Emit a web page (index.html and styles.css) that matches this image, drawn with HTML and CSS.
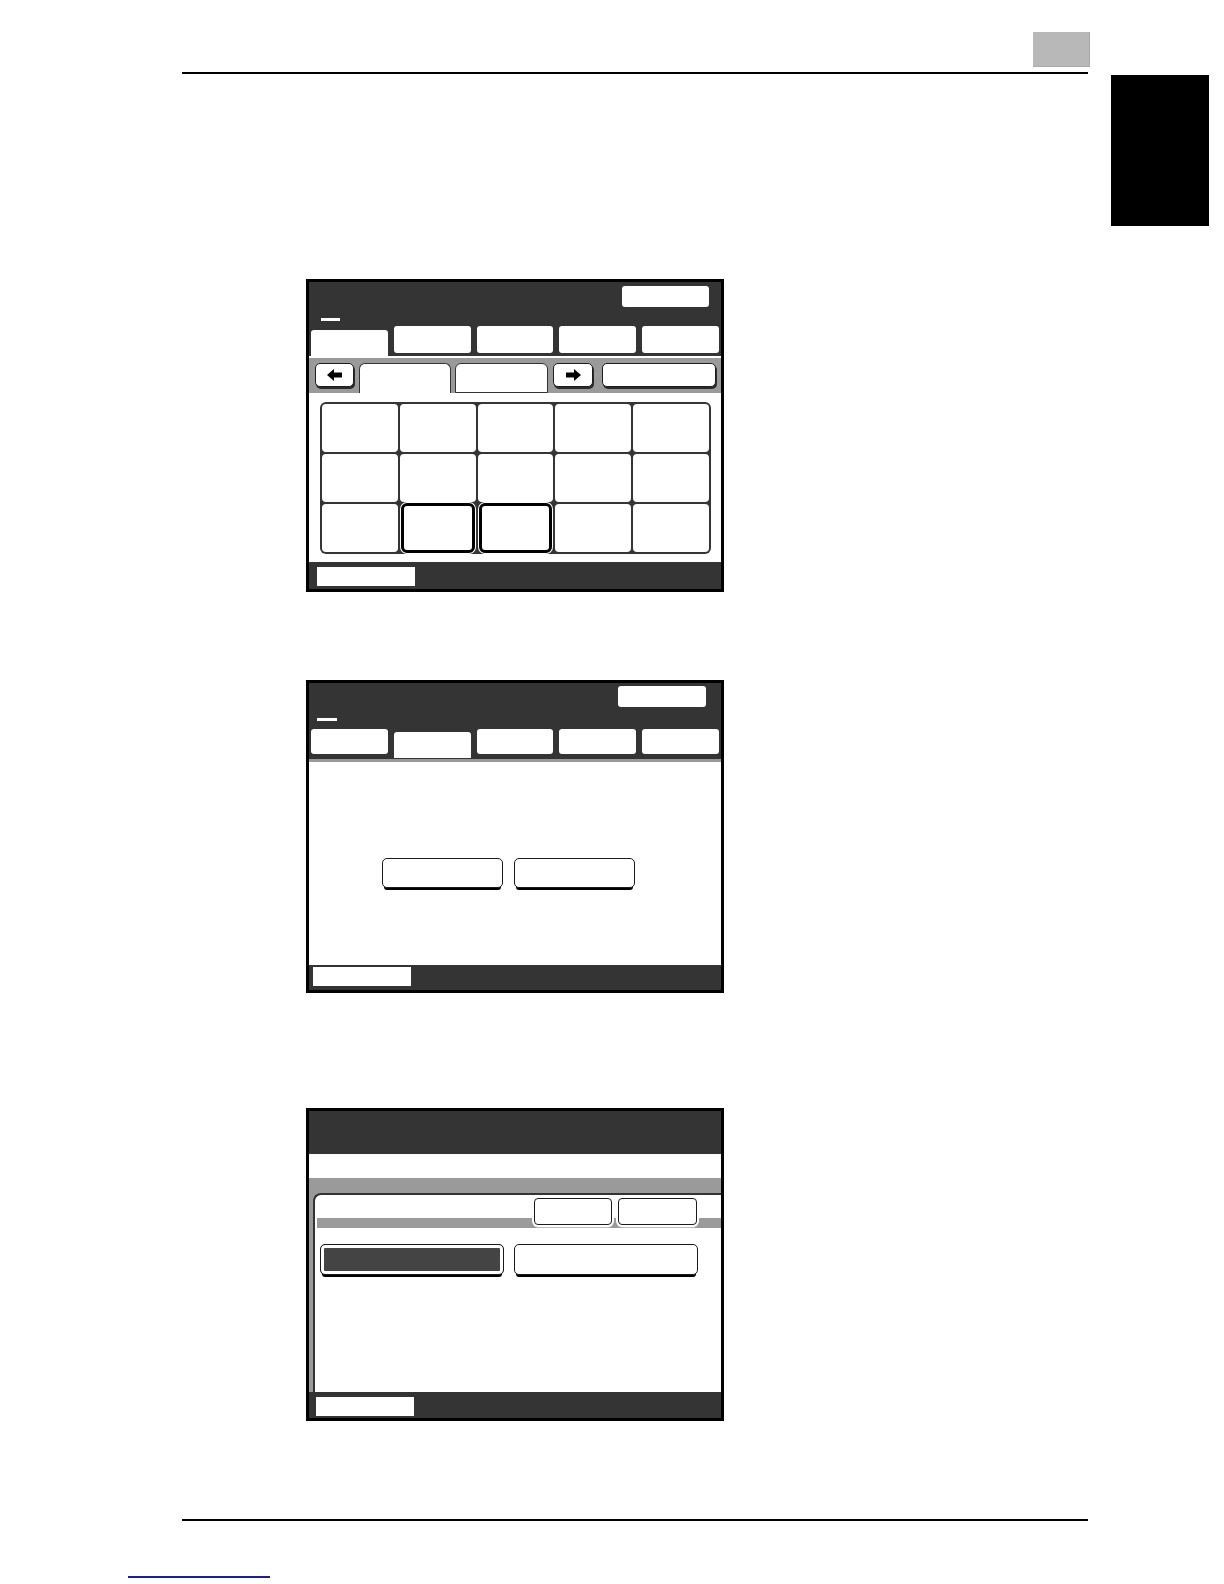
FILE: index.html
```html
<!DOCTYPE html>
<html lang="en">
<head>
<meta charset="utf-8">
<title>Panel screens</title>
<link rel="stylesheet" href="styles.css">
</head>
<body>
<div class="page">
  <div class="main">
    <div class="top">
      <div class="pagebox"></div>
    </div>
    <div class="rule"></div>

    <!-- Screen 1 -->
    <div class="frame s1">
      <div class="hdr hdr1">
        <div class="close c1"></div>
        <div class="dash d1"></div>
        <div class="tabs tabs1">
          <div class="tab active"></div>
          <div class="tab"></div>
          <div class="tab"></div>
          <div class="tab"></div>
          <div class="tab"></div>
        </div>
      </div>
      <div class="subbar">
        <div class="arrow-btn left">
          <svg width="16" height="12" viewBox="0 0 16 12"><polygon points="0,6 7,0 7,3.5 15,3.5 15,8.5 7,8.5 7,12" fill="#000"/></svg>
        </div>
        <div class="subtab open"></div>
        <div class="subtab closed"></div>
        <div class="arrow-btn right">
          <svg width="16" height="12" viewBox="0 0 16 12"><polygon points="16,6 9,0 9,3.5 1,3.5 1,8.5 9,8.5 9,12" fill="#000"/></svg>
        </div>
        <div class="wide-btn"></div>
      </div>
      <div class="content1">
        <div class="grid">
          <div class="cell"></div><div class="cell"></div><div class="cell"></div><div class="cell"></div><div class="cell"></div>
          <div class="cell"></div><div class="cell"></div><div class="cell"></div><div class="cell"></div><div class="cell"></div>
          <div class="cell"></div><div class="cell sel"></div><div class="cell sel"></div><div class="cell"></div><div class="cell"></div>
        </div>
      </div>
      <div class="ftr f1"><div class="ftr-box"></div></div>
    </div>

    <!-- Screen 2 -->
    <div class="frame s2">
      <div class="hdr hdr2">
        <div class="close c2"></div>
        <div class="dash d2"></div>
        <div class="tabs tabs2">
          <div class="tab"></div>
          <div class="tab active"></div>
          <div class="tab"></div>
          <div class="tab"></div>
          <div class="tab"></div>
        </div>
      </div>
      <div class="content2">
        <div class="btn b2"></div>
        <div class="btn b2"></div>
      </div>
      <div class="ftr f2"><div class="ftr-box"></div></div>
    </div>

    <!-- Screen 3 -->
    <div class="frame s3">
      <div class="hdr3"></div>
      <div class="band"></div>
      <div class="s3body">
        <div class="panel">
          <div class="prow">
            <div class="sbtn w78"></div>
            <div class="sbtn w79"></div>
          </div>
          <div class="brow">
            <div class="btn big dark"></div>
            <div class="btn big"></div>
          </div>
        </div>
      </div>
      <div class="ftr f3"><div class="ftr-box"></div></div>
    </div>

    <div class="rule bottom"></div>
  </div>
  <div class="side">
    <div class="thumb"></div>
  </div>
</div>
<div class="link"></div>
</body>
</html>
```

FILE: styles.css
```css
html, body {
  margin: 0;
  padding: 0;
  background: #fff;
  font-family: "Liberation Sans", Arial, sans-serif;
}
body {
  width: 1224px;
  height: 1584px;
  overflow: hidden;
}
.page {
  display: flex;
  align-items: flex-start;
}
.main {
  margin-left: 182px;
  width: 906px;
  display: flex;
  flex-direction: column;
}
.top {
  height: 72px;
  display: flex;
  justify-content: flex-end;
}
.pagebox {
  margin-top: 32px;
  margin-right: -2px;
  width: 57px;
  height: 35px;
  background: #b8b8b8;
  box-shadow: inset -1px -1px 0 #a9a9a9;
}
.rule {
  height: 2px;
  background: #000;
}
.rule.bottom {
  margin-top: 98px;
}
.side {
  margin-left: 23px;
  width: 98px;
  padding-top: 75px;
}
.thumb {
  height: 151px;
  background: #000;
}
.link {
  margin-left: 128px;
  margin-top: 55px;
  width: 142px;
  height: 2px;
  background: #1f1f8a;
}

/* frames */
.frame {
  width: 412px;
  height: 307px;
  border: 3px solid #000;
  margin-left: 124px;
  display: flex;
  flex-direction: column;
  background: #fff;
}
.s1 { margin-top: 205px; }
.s2 { margin-top: 88px; }
.s3 { margin-top: 115px; }

.hdr {
  background: #343434;
  display: flex;
  flex-direction: column;
}
.hdr1 {
  height: 74px;
  border-bottom: 2px solid #fff;
}
.hdr2 {
  height: 76px;
  border-bottom: 3px solid #9a9a9a;
}
.close {
  align-self: flex-end;
  width: 87px;
  height: 21px;
  background: #fff;
  border-radius: 3px;
}
.c1 { margin: 4px 12px 0 0; }
.c2 { margin: 3px 15px 0 0; width: 88px; }
.dash {
  width: 19px;
  height: 3px;
  background: #fff;
}
.d1 { margin: 11px 0 0 12px; }
.d2 { margin: 11px 0 0 8px; width: 20px; }
.tabs {
  margin-top: auto;
  display: flex;
  align-items: flex-end;
  gap: 6px;
  padding: 0 2px;
}
.tab {
  flex: 1;
  background: #fff;
  border-radius: 3px;
}
.tabs1 .tab { height: 27px; margin-bottom: 3px; }
.tabs1 .tab.active { height: 26px; margin-bottom: 0; border-radius: 3px 3px 0 0; }
.tabs2 .tab { height: 25px; margin-bottom: 5px; }
.tabs2 .tab.active { height: 26px; margin-bottom: 1px; border-radius: 3px 3px 0 0; }

/* screen 1 sub bar */
.subbar {
  height: 35px;
  box-sizing: border-box;
  background: #9a9a9a;
  display: flex;
  align-items: flex-start;
  padding: 5px 0 0 6px;
}
.arrow-btn {
  box-sizing: border-box;
  height: 24px;
  background: #fff;
  border: 1.5px solid #1e1e1e;
  border-radius: 5px;
  box-shadow: 1px 2px 0 #2a2a2a;
  display: flex;
  align-items: center;
  justify-content: center;
}
.arrow-btn.left { width: 39px; margin-right: 5px; }
.arrow-btn.right { width: 40px; margin-right: 9px; }
.subtab {
  box-sizing: border-box;
  height: 30px;
  background: #fff;
  border: 1.5px solid #333;
  border-radius: 6px 6px 0 0;
}
.subtab.open { width: 92px; margin-right: 4px; border-bottom: none; }
.subtab.closed { width: 93px; margin-right: 5px; border-bottom: 1.5px solid #333; }
.wide-btn {
  box-sizing: border-box;
  width: 114px;
  height: 24px;
  background: #fff;
  border: 1.5px solid #1e1e1e;
  border-radius: 5px;
  box-shadow: 1px 2px 0 #2a2a2a;
}
.content1 {
  height: 169px;
  box-sizing: border-box;
  padding: 9px 0 0 11px;
  background: #fff;
}
.grid {
  box-sizing: border-box;
  width: 391px;
  height: 152px;
  padding: 2px;
  gap: 2px;
  background: #353535;
  border-radius: 6px;
  display: grid;
  grid-template-columns: repeat(5, 1fr);
  grid-template-rows: repeat(3, 1fr);
}
.cell {
  background: #fff;
  border-radius: 4px;
}
.cell.sel {
  border: 3px solid #000;
  margin: -1px 1px;
  border-radius: 6px;
  box-shadow: 0 0 0 1px #fff;
}

/* footers */
.ftr {
  background: #343434;
  box-sizing: border-box;
}
.ftr-box {
  width: 98px;
  height: 19px;
  background: #fff;
}
.f1 { height: 27px; padding: 5px 0 0 8px; }
.f2 { height: 25px; padding: 2px 0 0 4px; }
.f3 { height: 26px; padding: 5px 0 0 7px; }

/* screen 2 */
.content2 {
  height: 203px;
  box-sizing: border-box;
  padding: 96px 0 0 73px;
  display: flex;
  align-items: flex-start;
  gap: 11px;
}
.btn {
  box-sizing: border-box;
  background: #fff;
  border: 1.5px solid #1a1a1a;
  border-radius: 5px;
  box-shadow: 0 4px 0 -2px #000;
}
.b2 { width: 121px; height: 30px; }

/* screen 3 */
.hdr3 {
  height: 43px;
  background: #343434;
}
.band {
  height: 24px;
  background: #fff;
}
.s3body {
  height: 214px;
  box-sizing: border-box;
  padding-top: 15px;
  background: #9a9a9a;
  display: flex;
}
.panel {
  flex: 1;
  margin-left: 4px;
  background: #fff;
  border-top: 2px solid #333;
  border-left: 2px solid #333;
  border-top-left-radius: 8px;
  display: flex;
  flex-direction: column;
}
.prow {
  height: 35px;
  box-sizing: border-box;
  padding: 3px 24px 0 0;
  display: flex;
  justify-content: flex-end;
  align-items: flex-start;
  gap: 6px;
  background: linear-gradient(#9a9a9a, #9a9a9a) no-repeat 2px 23px / calc(100% - 2px) 10px;
}
.sbtn {
  box-sizing: border-box;
  height: 27px;
  background: #fff;
  border: 1.5px solid #1a1a1a;
  border-radius: 4px;
  box-shadow: 0 0 0 2px #fff, 0 2px 0 1px #bbb;
}
.w78 { width: 78px; }
.w79 { width: 79px; }
.brow {
  margin-top: 14px;
  padding-left: 5px;
  display: flex;
  gap: 10px;
  align-items: flex-start;
}
.big {
  width: 184px;
  height: 31px;
}
.big.dark {
  background: #444;
  box-shadow: inset 0 0 0 3px #fff, 0 4px 0 -2px #000;
}
```
